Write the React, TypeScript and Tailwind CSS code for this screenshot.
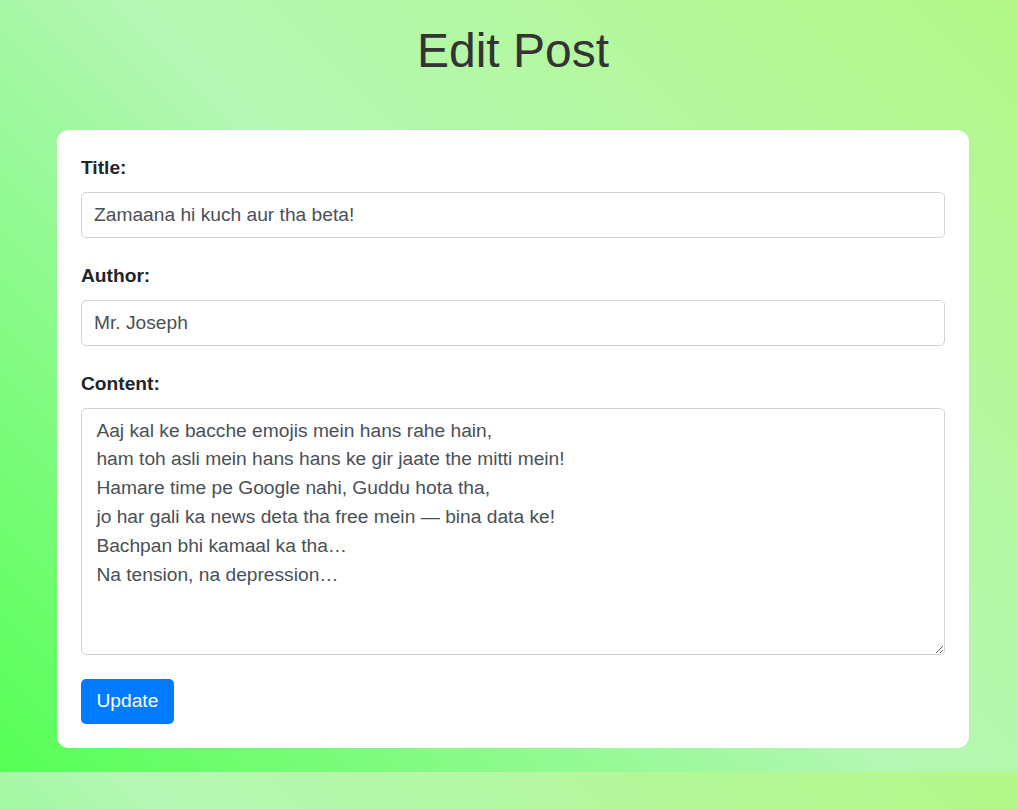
import { useState } from 'react';

const poem = `Aaj kal ke bacche emojis mein hans rahe hain,
ham toh asli mein hans hans ke gir jaate the mitti mein!
Hamare time pe Google nahi, Guddu hota tha,
jo har gali ka news deta tha free mein — bina data ke!
Bachpan bhi kamaal ka tha…
Na tension, na depression…`;

export default function App() {
  const [title, setTitle] = useState('Zamaana hi kuch aur tha beta!');
  const [author, setAuthor] = useState('Mr. Joseph');
  const [content, setContent] = useState(poem);

  return (
    <div className="min-h-screen bg-[linear-gradient(45deg,#55ff55,#b4f7b4,#b4f888)] bg-[length:100%_772px] bg-repeat font-['Liberation_Sans',Arial,sans-serif]">
      <div className="pl-[57px] pr-[49px] pt-[21.6px] pb-[24px]">
        <h1 className="text-center text-[48px] leading-[57.6px] font-normal text-[#333333]">Edit Post</h1>

        <form
          className="mt-[50.8px] bg-white rounded-xl p-6"
          onSubmit={(e) => e.preventDefault()}
        >
          <div className="mb-[23.6px]">
            <label className="block mb-[9.6px] text-[19.2px] leading-[28.8px] font-bold text-[#212529]">Title:</label>
            <input
              value={title}
              onChange={(e) => setTitle(e.target.value)}
              className="block w-full h-[46px] px-3 border border-[#ced4da] rounded-[5px] text-[19.2px] text-[#495057] outline-none"
            />
          </div>

          <div className="mb-[23.6px]">
            <label className="block mb-[9.6px] text-[19.2px] leading-[28.8px] font-bold text-[#212529]">Author:</label>
            <input
              value={author}
              onChange={(e) => setAuthor(e.target.value)}
              className="block w-full h-[46px] px-3 border border-[#ced4da] rounded-[5px] text-[19.2px] text-[#495057] outline-none"
            />
          </div>

          <div className="mb-[24px]">
            <label className="block mb-[9.6px] text-[19.2px] leading-[28.8px] font-bold text-[#212529]">Content:</label>
            <textarea
              value={content}
              onChange={(e) => setContent(e.target.value)}
              className="block w-full h-[247px] px-[14.4px] py-[7.2px] border border-[#ced4da] rounded-[5px] text-[19.2px] leading-[28.8px] text-[#495057] outline-none"
            />
          </div>

          <button
            type="submit"
            className="h-[45px] px-[15.5px] rounded-[5px] bg-[#007bff] text-white text-[19.2px] leading-[28.8px]"
          >
            Update
          </button>
        </form>
      </div>
    </div>
  );
}
